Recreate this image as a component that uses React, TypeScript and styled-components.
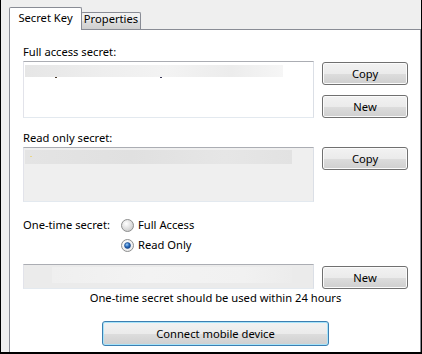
import React from "react";
import styled, { createGlobalStyle } from "styled-components";

const GlobalStyle = createGlobalStyle`
  html, body { margin: 0; padding: 0; background: #f0f0f0; }
  body { font-family: "Noto Sans", "Open Sans", sans-serif; font-size: 11.2px; color: #000; }
  * { box-sizing: border-box; }
`;

const Window = styled.div`
  width: 422px;
  height: 354px;
  display: flex;
  flex-direction: column;
  background: #efefef;
  border-left: 1px solid #000;
  border-right: 1px solid #000;
  border-bottom: 2px solid #000;
  padding: 7px 0 0 8px;
  overflow: hidden;
`;

const TabStrip = styled.div`
  display: flex;
  align-items: flex-end;
  height: 23px;
  margin-bottom: -1px;
  position: relative;
  z-index: 1;
`;

const Tab = styled.div<{ $active?: boolean }>`
  display: flex;
  justify-content: center;
  border: 1px solid #898c95;
  border-bottom: none;
  border-radius: 2px 2px 0 0;
  ${(p) =>
    p.$active
      ? `
    width: 73px;
    height: 23px;
    padding-top: 2px;
    line-height: 15px;
    background: #fff;
    position: relative;
    z-index: 2;
  `
      : `
    width: 60px;
    height: 17px;
    margin-left: -1px;
    margin-bottom: 1px;
    line-height: 12px;
    background: linear-gradient(#f3f3f3 0%, #ebebeb 50%, #dddddd 51%, #cfcfcf 100%);
  `}
`;

const Panel = styled.div`
  flex: 1;
  display: flex;
  flex-direction: column;
  background: #fff;
  border: 1px solid #898c95;
  border-bottom: none;
  padding: 14px 12px 0 13px;
`;

const Label = styled.div<{ $gap?: number }>`
  line-height: 15px;
  margin-top: ${(p) => p.$gap ?? 0}px;
`;

const FieldRow = styled.div<{ $gap: number }>`
  display: grid;
  grid-template-columns: 291px 86px;
  column-gap: 8px;
  align-items: start;
  margin-top: ${(p) => p.$gap}px;
`;

const TextBox = styled.div<{ $h: number; $bg: string }>`
  height: ${(p) => p.$h}px;
  background: ${(p) => p.$bg};
  border: 1px solid #dbdfe6;
  border-top-color: #abadb3;
  border-left-color: #e2e3ea;
  border-bottom-color: #e3e9ef;
  display: flex;
  align-items: flex-start;
`;

const Blur = styled.div<{ $x: number; $y: number; $w: number; $h: number; $bg: string }>`
  position: relative;
  margin: ${(p) => p.$y}px 0 0 ${(p) => p.$x}px;
  width: ${(p) => p.$w}px;
  height: ${(p) => p.$h}px;
  background: ${(p) => p.$bg};
`;

const Speck = styled.span<{ $x: number; $y: number; $c: string }>`
  position: absolute;
  left: ${(p) => p.$x}px;
  top: ${(p) => p.$y}px;
  width: 2px;
  height: 1px;
  background: ${(p) => p.$c};
`;

const ButtonCol = styled.div<{ $pad?: number }>`
  display: flex;
  flex-direction: column;
  gap: 10px;
  padding-top: ${(p) => p.$pad ?? 0}px;
`;

const Button = styled.button<{ $primary?: boolean; $w?: number; $h?: number }>`
  width: ${(p) => p.$w ?? 86}px;
  height: ${(p) => p.$h ?? 23}px;
  padding: 0;
  font-family: "Noto Sans", "Open Sans", sans-serif;
  font-size: 11.2px;
  line-height: 15px;
  color: #000;
  border: 1px solid ${(p) => (p.$primary ? "#3c7fb1" : "#707070")};
  border-radius: 3px;
  background: linear-gradient(#f2f2f2 0%, #ebebeb 50%, #dddddd 51%, #cfcfcf 100%);
  box-shadow: inset 0 0 0 1px ${(p) => (p.$primary ? "#a6e3fa" : "#fbfbfb")};
`;

const OneTime = styled.div`
  display: grid;
  grid-template-columns: 98px auto;
  margin-top: 13px;
`;

const RowLabel = styled.div`
  line-height: 20px;
`;

const RadioList = styled.div`
  display: flex;
  flex-direction: column;
`;

const RadioRow = styled.label`
  display: flex;
  align-items: center;
  gap: 4px;
  height: 20px;
  line-height: 20px;
`;

const Note = styled.div`
  line-height: 15px;
  margin-top: 1px;
  text-align: center;
`;

const ConnectWrap = styled.div`
  display: flex;
  justify-content: center;
  margin-top: 16px;
`;

function Radio({ checked }: { checked?: boolean }) {
  return (
    <svg width="13" height="13" viewBox="0 0 13 13">
      <defs>
        <radialGradient id={checked ? "rgOn" : "rgOff"} cx="0.4" cy="0.35" r="0.7">
          <stop offset="0" stopColor="#ffffff" />
          <stop offset="1" stopColor={checked ? "#e8e8e8" : "#c9c9c9"} />
        </radialGradient>
        <radialGradient id="dot" cx="0.4" cy="0.35" r="0.7">
          <stop offset="0" stopColor="#9ed0f7" />
          <stop offset="0.5" stopColor="#2e6fbf" />
          <stop offset="1" stopColor="#0d3b84" />
        </radialGradient>
      </defs>
      <circle cx="6.5" cy="6.5" r="6" fill={`url(#${checked ? "rgOn" : "rgOff"})`} stroke="#8e8f8f" strokeWidth="1" />
      {checked ? <circle cx="6.5" cy="6.5" r="3" fill="url(#dot)" stroke="#1b4a8a" strokeWidth="0.6" /> : null}
    </svg>
  );
}

export default function App() {
  return (
    <>
      <GlobalStyle />
      <Window>
        <TabStrip>
          <Tab $active>Secret Key</Tab>
          <Tab>Properties</Tab>
        </TabStrip>
        <Panel>
          <Label>Full access secret:</Label>
          <FieldRow $gap={2}>
            <TextBox $h={57} $bg="#fff">
              <Blur
                $x={1}
                $y={3}
                $w={258}
                $h={12}
                $bg="linear-gradient(to right, #e6e6e6, #eeeeee 30%, #f3f3f3 55%, #ececec 80%, #f6f6f6)"
              >
                <Speck $x={30} $y={12} $c="#4a3a2a" />
                <Speck $x={135} $y={12} $c="#3a3a5a" />
              </Blur>
            </TextBox>
            <ButtonCol $pad={1}>
              <Button>Copy</Button>
              <Button>New</Button>
            </ButtonCol>
          </FieldRow>

          <Label $gap={12}>Read only secret:</Label>
          <FieldRow $gap={2}>
            <TextBox $h={55} $bg="#efefef">
              <Blur
                $x={1}
                $y={2}
                $w={267}
                $h={14}
                $bg="linear-gradient(to right, #e4e4e4, #e0e0e0 40%, #e6e6e6 75%, #e2e2e2)"
              >
                <Speck $x={5} $y={6} $c="#e8d68a" />
              </Blur>
            </TextBox>
            <ButtonCol>
              <Button>Copy</Button>
            </ButtonCol>
          </FieldRow>

          <OneTime>
            <RowLabel>One-time secret:</RowLabel>
            <RadioList>
              <RadioRow>
                <Radio />
                Full Access
              </RadioRow>
              <RadioRow>
                <Radio checked />
                Read Only
              </RadioRow>
            </RadioList>
          </OneTime>

          <FieldRow $gap={9}>
            <TextBox $h={25} $bg="#ebebeb">
              <Blur
                $x={28}
                $y={2}
                $w={240}
                $h={16}
                $bg="linear-gradient(to right, #efefef, #f3f3f3 40%, #f1f1f1 80%, #ececec)"
              />
            </TextBox>
            <ButtonCol $pad={2}>
              <Button>New</Button>
            </ButtonCol>
          </FieldRow>

          <Note>One-time secret should be used within 24 hours</Note>

          <ConnectWrap>
            <Button $primary $w={227} $h={25}>
              Connect mobile device
            </Button>
          </ConnectWrap>
        </Panel>
      </Window>
    </>
  );
}
